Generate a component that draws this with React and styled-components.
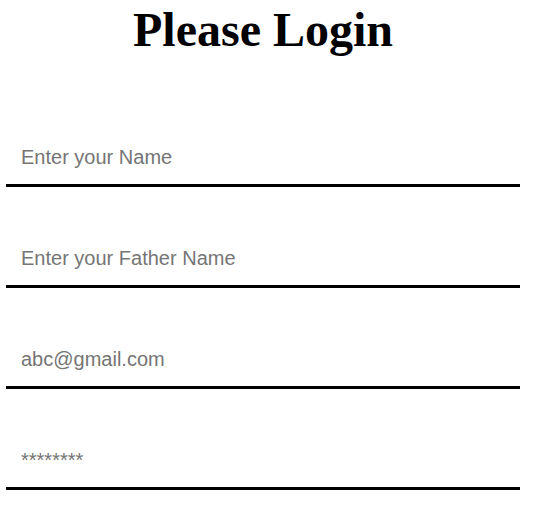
import React from 'react';
import styled, {createGlobalStyle} from "styled-components";

const GlobalStyle = createGlobalStyle`
  body {
    margin: 0;
    background: #fff;
    font-family: "Liberation Serif", "Times New Roman", serif;
  }
`

const Wrapper = styled.div`
  width: 514px;
  margin-left: 6px;
  display: flex;
  flex-direction: column;
`

const Title = styled.h1`
  margin: 0;
  padding-top: 2px;
  text-align: center;
  font-family: "Liberation Serif", "Times New Roman", serif;
  font-size: 48px;
  font-weight: bold;
  line-height: 55px;
  color: #000;
`

const Form = styled.form`
  display: flex;
  flex-direction: column;
  gap: 40px;
  margin-top: 69px;
`

const Field = styled.input`
  box-sizing: border-box;
  width: 100%;
  height: 61px;
  padding: 4px 15px 0;
  border: none;
  border-bottom: 3px solid #000;
  outline: none;
  font-family: "Liberation Sans", Arial, sans-serif;
  font-size: 20px;
  color: #000;
  background: transparent;

  &::placeholder {
    color: #757575;
  }
`

const App = () => {
    return (
        <>
            <GlobalStyle/>
            <Wrapper>
                <Title>Please Login</Title>
                <Form>
                    <Field type="text" placeholder="Enter your Name"/>
                    <Field type="text" placeholder="Enter your Father Name"/>
                    <Field type="email" placeholder="abc@gmail.com"/>
                    <Field type="password" placeholder="********"/>
                </Form>
            </Wrapper>
        </>
    );
}

export default App;
